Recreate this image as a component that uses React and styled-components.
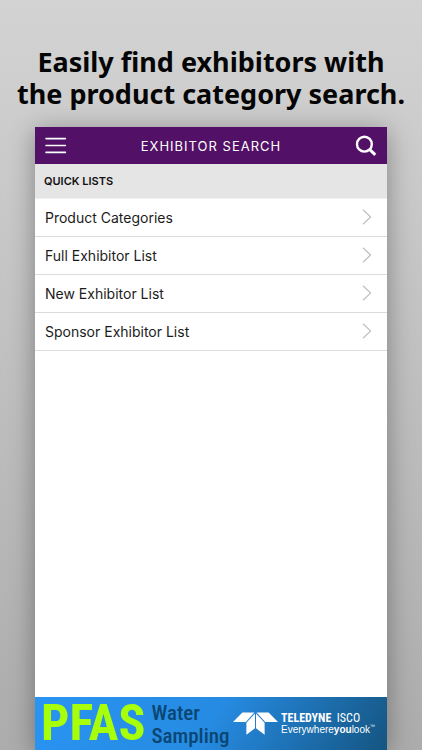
import React from 'react';
import styled, { createGlobalStyle } from 'styled-components';

const GlobalStyle = createGlobalStyle`
    * {
        box-sizing: border-box;
    }

    body {
        margin: 0;
        font-family: Inter, "Liberation Sans", sans-serif;
        color: #1c1c1c;
    }
`;

const Page = styled.main`
    display: flex;
    flex-direction: column;
    min-height: 100vh;
    padding: 46px 35px 0;
    overflow: hidden;
    background: linear-gradient(#d3d3d3, #acacac);
`;

const Headline = styled.h1`
    margin: 0 -35px 17px;
    font-family: "Noto Sans", sans-serif;
    font-size: 27px;
    font-weight: 700;
    line-height: 32px;
    text-align: center;
    color: #050505;
`;

const Screen = styled.section`
    flex: 1;
    display: flex;
    flex-direction: column;
    background: #fff;
    box-shadow: 0 4px 24px rgba(0, 0, 0, 0.35);
`;

const TopBar = styled.header`
    display: flex;
    align-items: center;
    justify-content: space-between;
    height: 37px;
    padding: 0 10px;
    background: #521166;
    color: #fff;
`;

const ScreenTitle = styled.h2`
    margin: 0;
    font-size: 13px;
    font-weight: 400;
    letter-spacing: 1px;
`;

const IconButton = styled.button`
    display: flex;
    padding: 0;
    border: none;
    background: none;
    color: inherit;
    cursor: pointer;
`;

const SectionTitle = styled.h3`
    margin: 0;
    padding: 0 9px;
    border-bottom: 1px solid #f2f2f2;
    background: #e5e5e5;
    color: #111;
    font-size: 11px;
    font-weight: 600;
    line-height: 34px;
`;

const List = styled.ul`
    margin: 0;
    padding: 0;
    list-style: none;
`;

const Row = styled.a`
    display: flex;
    align-items: center;
    justify-content: space-between;
    height: 38px;
    padding: 0 15px 1px 10px;
    border-bottom: 1px solid #dcdcdc;
    color: inherit;
    font-size: 14px;
    text-decoration: none;
`;

const Banner = styled.a`
    display: flex;
    align-items: center;
    justify-content: space-between;
    height: 53px;
    margin-top: auto;
    padding: 0 12px 0 6px;
    overflow: hidden;
    background: linear-gradient(120deg, #2994f2 0%, #268be2 50%, #155581 100%);
    font-family: "Roboto Condensed", Roboto, sans-serif;
    text-decoration: none;
    white-space: nowrap;
`;

const Pitch = styled.span`
    display: flex;
    align-items: center;
    gap: 6px;
`;

const Product = styled.span`
    color: #a8ff0a;
    font-size: 50px;
    font-weight: 700;
    line-height: 53px;
`;

const Subject = styled.span`
    display: flex;
    flex-direction: column;
    padding-top: 2px;
    color: #0b4673;
    font-size: 21px;
    font-weight: 500;
    line-height: 23px;
`;

const Sponsor = styled.span`
    display: flex;
    align-items: center;
    gap: 3px;
    color: #fff;
`;

const SponsorText = styled.span`
    display: flex;
    flex-direction: column;
    font-size: 12px;
    line-height: 12px;
`;

const Tagline = styled.span`
    font-family: "Liberation Sans", sans-serif;
    font-size: 10px;

    small {
        font-size: 5px;
        line-height: 5px;
        vertical-align: top;
    }
`;

const lists = [
    'Product Categories',
    'Full Exhibitor List',
    'New Exhibitor List',
    'Sponsor Exhibitor List',
];

function MenuIcon() {
    return (
        <svg width="22" height="18" viewBox="0 0 22 18" fill="none" stroke="currentColor" strokeWidth="1.6" strokeLinecap="round">
            <path d="M1 1.6h19.4M1 8.5h19.4M1 15.4h19.4" />
        </svg>
    );
}

function SearchIcon() {
    return (
        <svg width="22" height="22" viewBox="0 0 22 22" fill="none" stroke="currentColor">
            <circle cx="9.4" cy="9.2" r="7.4" strokeWidth="2.4" />
            <path d="M14.5 14.4l5.8 5.4" strokeWidth="3" />
        </svg>
    );
}

function ChevronIcon() {
    return (
        <svg width="10" height="16" viewBox="0 0 10 16" fill="none" stroke="#c2c2c6" strokeWidth="1.3">
            <path d="M1 .8L8.6 8 1 15.2" />
        </svg>
    );
}

function SponsorLogo() {
    return (
        <svg width="45" height="23" viewBox="0 0 45 23" fill="currentColor">
            <path d="M9.4.6h12l-8.6 9.3H0z" />
            <path d="M23.6.6h12L45 9.9H32.2z" />
            <path d="M22 1.6v14.6l-8.6 6.6V10.8z" />
            <path d="M23 1.6v14.6l8.6 6.6V10.8z" />
        </svg>
    );
}

export default function App() {
    return (
        <Page>
            <GlobalStyle />
            <Headline>
                Easily find exhibitors with<br />
                the product category search.
            </Headline>
            <Screen>
                <TopBar>
                    <IconButton type="button" aria-label="Menu">
                        <MenuIcon />
                    </IconButton>
                    <ScreenTitle>EXHIBITOR SEARCH</ScreenTitle>
                    <IconButton type="button" aria-label="Search">
                        <SearchIcon />
                    </IconButton>
                </TopBar>
                <SectionTitle>QUICK LISTS</SectionTitle>
                <List>
                    {lists.map((name) => (
                        <li key={name}>
                            <Row href="#">
                                {name}
                                <ChevronIcon />
                            </Row>
                        </li>
                    ))}
                </List>
                <Banner href="#">
                    <Pitch>
                        <Product>PFAS</Product>
                        <Subject>
                            <span>Water</span>
                            <span>Sampling</span>
                        </Subject>
                    </Pitch>
                    <Sponsor>
                        <SponsorLogo />
                        <SponsorText>
                            <span><b>TELEDYNE</b>&nbsp; ISCO</span>
                            <Tagline>Everywhere<b>you</b>look<small>™</small></Tagline>
                        </SponsorText>
                    </Sponsor>
                </Banner>
            </Screen>
        </Page>
    );
}
